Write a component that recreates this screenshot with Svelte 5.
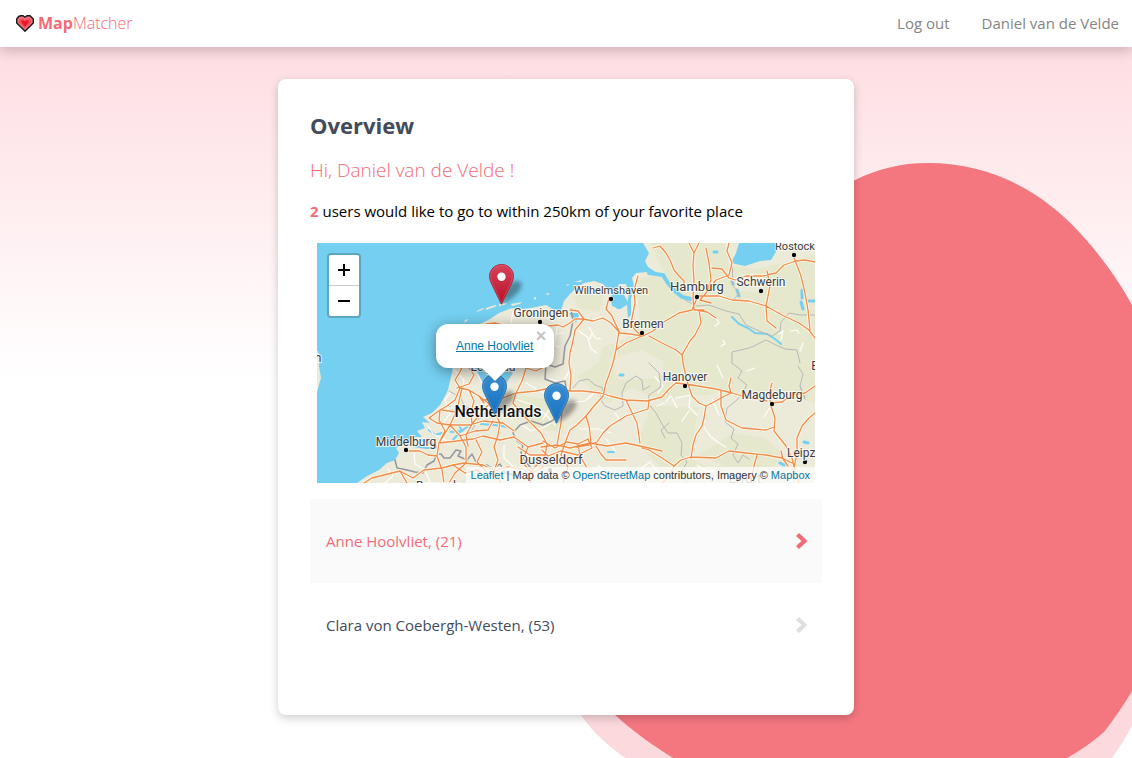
<script>
  const people = [
    { name: 'Anne Hoolvliet', age: 21, active: true },
    { name: 'Clara von Coebergh-Westen', age: 53, active: false }
  ];

  const markers = [
    { color: 'red', dx: -77, top: 21, label: 'Your favorite place' },
    { color: 'blue', dx: -84, top: 131, label: 'Anne Hoolvliet' },
    { color: 'blue', dx: -22, top: 140, label: 'Clara von Coebergh-Westen' }
  ];

  const cities = [
    { name: 'Rostock', x: 478, y: 7, dx: 477, dy: 12, size: 11 },
    { name: 'Schwerin', x: 444, y: 43, dx: 444, dy: 48, size: 12 },
    { name: 'Hamburg', x: 380, y: 48, dx: 380, dy: 54, size: 13 },
    { name: 'Wilhelmshaven', x: 294, y: 51, dx: 294, dy: 56, size: 11 },
    { name: 'Groningen', x: 224, y: 74, dx: 223, dy: 79, size: 12 },
    { name: 'Bremen', x: 326, y: 85, dx: 325, dy: 90, size: 12 },
    { name: 'Hanover', x: 368, y: 138, dx: 368, dy: 143, size: 12 },
    { name: 'Magdeburg', x: 455, y: 156, dx: 455, dy: 161, size: 12 },
    { name: 'Leipzig', x: 489, y: 214, dx: 488, dy: 219, size: 12 },
    { name: 'Middelburg', x: 89, y: 203, dx: 89, dy: 207, size: 12 },
    { name: 'Dusseldorf', x: 234, y: 221, dx: 233, dy: 227, size: 13 },
    { name: 'Lelystad', x: 176, y: 128, size: 12 },
    { name: 'Brussels', x: 122, y: 247, size: 12 }
  ];

  const highways = [
    'M169 81L178 80L186 82M224 81L232 83L241 82L246 84L253 80L258 76L266 76L276 78L286 75L294 80L303 90L313 91L326 93',
    'M253 67L261 68L267 76L258 87L256 98L253 110L252 120L254 132L253 147L246 157L244 180L240 202',
    'M292 55L289 66L295 73L298 80L302 88L299 107L296 120L292 132L289 140L286 153L277 163L269 173L272 183L273 190L274 201',
    'M321 33L317 47L318 60L314 80L318 87L325 93L309 100L299 107',
    'M332 93L345 100L359 107L365 112L366 120L370 138L375 153L382 160L389 163L387 175L385 183L379 192L376 202L374 215',
    'M326 93L336 88L345 80L362 70L375 67L380 55M382 67L384 80L378 92L373 98L365 112M380 67L390 69L399 75',
    'M336 5L343 3L349 10L353 17L357 27L362 33L367 38L368 48',
    'M372 0L377 10L376 22L377 38L376 55L377 67L387 67M377 10L382 0',
    'M389 5L392 20L394 37L389 50L383 57L394 60',
    'M412 0L410 8L415 20L412 32L399 37L389 50M395 25L405 26L412 35L418 37L429 33L445 33L459 30L467 22L479 18L488 17L498 19',
    'M380 53L402 53L415 57L432 58L449 63L465 72L482 80L492 87L498 95',
    'M450 28L453 43L449 63L450 78L459 85M477 15L481 25L484 33L488 50L491 67L493 87',
    'M166 157L186 155L199 150L219 148L233 145L254 148L266 148L283 150L293 153L309 157L330 158L345 154L352 146L359 140L375 142L399 146L415 150L432 155L450 158',
    'M498 143L488 150L475 152L465 159L454 160M455 140L452 150L454 163L458 175L457 188L469 203L475 215L478 228L482 240',
    'M389 163L397 159L404 155L414 150L412 143L414 135M404 147L404 163L409 177L425 185L437 186L449 187L457 184',
    'M325 205L332 207L345 215L357 223L352 233L345 240M357 223L364 217L374 214L399 215L412 208L429 210L449 212L465 215L475 220M440 212L437 223L434 240M464 208L466 216L471 223',
    'M498 170L492 175L485 183L480 195L480 210L477 225',
    'M332 157L331 166L309 173L293 183L286 190L280 199L272 202L259 204',
    'M309 157L317 174L320 180L323 200M224 204L240 202L253 205L273 200L290 203L309 200L332 205L345 208',
    'M279 203L284 211L289 217L309 217M269 173L260 182L253 187L248 200L244 212',
    'M147 120L143 129L138 137L143 145L152 147L162 153L167 160M143 145L138 157L130 163L123 167L112 175L120 180L133 182L153 182L166 178L186 180L197 188',
    'M145 145L142 158L140 167L133 182L127 192L122 200L120 213L125 227L127 240M140 145L152 141L157 132L150 122',
    'M92 208L103 208L111 212L120 213M125 225L107 227L96 235L83 228L67 232L55 235L47 240M83 228L90 240',
    'M125 225L136 222L147 220L166 222L178 228L190 224L206 226M122 200L140 198L156 196L166 193L183 197L197 194L211 204L226 200',
    'M133 182L143 193L149 204L149 220L138 230L132 240M123 167L122 177L128 188L122 200M152 147L157 158L154 169L155 181L149 192L151 203',
    'M155 181L168 165L173 160M162 153L171 160L177 168L183 180L181 192L177 204L181 217L177 228L184 240',
    'M199 150L196 160L204 170L214 180L224 190L230 201M199 150L205 138L209 125L219 128L225 125',
    'M143 193L158 188L171 187L176 178M125 167L138 169L150 166M136 222L148 230L160 227L170 236L177 228M159 197L165 209L160 219L169 228',
    'M226 198L238 205L250 199L261 201L271 196L275 205L261 212L244 208L231 213L225 207M230 201L228 213L218 224L207 237M244 212L251 224L246 240M261 201L263 213L270 225',
    'M201 204L213 212L227 212M211 204L205 219L215 230L226 224'
  ].join('');

  const minorRoads = [
    'M186 90L205 86L224 82L230 100L242 104M196 68L194 80M228 70L236 78M240 84L238 100L230 112M230 92L246 90M262 88L273 96L275 90M272 84L278 95L284 96',
    'M399 75L402 80L398 83M406 97L408 101L404 103M462 91L466 88L464 97M473 88L480 87L482 90M338 134L346 143L341 150M359 155L373 152L372 164L380 172',
    'M349 158L354 153L360 165M381 190L388 178M387 184L393 193L402 200L409 204M395 156L402 172M447 174L453 164M372 168L365 178M340 163L347 160',
    'M198 156L216 162L229 172L238 182M205 182L214 188L228 184L238 177M209 140L230 152L234 164L226 176M252 160L268 158L276 151M254 125L246 139L230 136',
    'M298 170L303 177M263 186L281 186L294 190M289 196L298 208M187 202L187 215L199 226M111 183L116 191L130 198',
    'M97 208L98 221L108 227L113 239M71 226L76 233L68 240M136 126L147 137L145 151M157 124L170 151L160 170L171 174M180 160L193 166L195 177',
    'M133 150L128 157L133 171L125 181M271 96L274 106L280 110M400 122L406 135M486 100L483 108M430 128L438 125',
    'M325 225L333 219L341 229M380 222L391 229L400 225M212 226L220 232L238 229L254 234M281 222L290 232L302 230'
  ].join('');

  const borders = [
    'M254 66L256 78L253 93L248 103L246 121L238 124L229 121L228 136L238 140L248 138L250 152L241 156L244 170L235 178L226 182L214 178L203 182L196 190L200 198L206 202L204 210L209 219L217 229L213 240',
    'M78 217L80 225L90 227L98 229L106 230L110 222L117 218L120 211L124 211L127 215L133 215L139 207L144 208L141 213L150 217L155 211L159 219L164 224L170 222L176 226L183 221L188 230L199 233'
  ].join('');

  const regions = [
    'M256 145L262 138L271 136L278 142L286 145L283 156L288 163L298 167L306 163L305 150L309 140L319 133L325 137L326 147L333 143',
    'M415 17L416 43L422 50L416 58M368 57L380 63L392 62L409 68L422 71L429 82L442 88L455 93L463 88L464 79L472 70L483 72L498 72',
    'M481 123L486 131L483 143L488 155M415 120L415 109L432 105L437 103L449 97L459 102L468 106L480 107L483 120M415 120L425 128L421 135L430 142L425 150L420 157L410 165L408 179L417 186L414 195L421 201L416 212L421 220L426 212L432 216',
    'M332 120L342 130L344 144L332 152L331 160L339 170L345 181L351 190L360 190L365 200L364 212L370 219L365 228L370 240M483 143L488 156M352 180L344 187L348 195',
    'M132 148L143 154L148 164L156 165L162 176L153 190M174 139L187 142L194 130L186 124'
  ].join('');
</script>

{#snippet chevron()}
  <svg class="chevron" viewBox="0 0 12 16" aria-hidden="true">
    <path d="M0 3L3 0L11.500 8L3 16L0 13L5.500 8Z" fill="currentColor" />
  </svg>
{/snippet}

<div class="page">
  <svg class="backdrop" viewBox="0 0 1132 758" preserveAspectRatio="xMaxYMax slice" aria-hidden="true">
    <path
      fill="#fbd9dd"
      d="M560 600C560 660 570 699 581 715C594 734 608 745 625 758H1112C1119 748 1126 737 1132 726V500Z"
    />
    <path
      fill="#f47780"
      d="M615 715C633 731 652 745 673 758H1067Q1087 747 1104 732Q1119 713 1132 691V305C1120 283 1103 258 1080 233C1042 191 990 163 928 163C900 163 878 169 855 180C730 238 600 400 590 560C587 620 590 690 615 715Z"
    />
  </svg>

  <header>
    <a class="brand" href="#home">
      <svg viewBox="0 0 18 17" aria-hidden="true">
        <path d="M5 .7H7L9 2.200L11 .7H14L17.300 4V8L9 16.200L.7 8V4L3 1.200Z" fill="#f0717b" stroke="#17171b" stroke-width="1.400" />
        <path d="M4.500 3.500H7L9 5.200L11 3.500H13.500L15 5V7.500L9 13.500L3 7.500V5Z" fill="#f34d5a" />
        <path d="M5.500 5.500H7.500L9 6.500L10.500 5.500H12.500V7.500L9 11.500L5.500 7.500Z" fill="#ec1528" />
      </svg>
      <span><b>Map</b>Matcher</span>
    </a>
    <nav>
      <a href="#logout">Log out</a>
      <a href="#profile">Daniel van de Velde</a>
    </nav>
  </header>

  <main>
    <h1>Overview</h1>
    <h2>Hi, Daniel van de Velde !</h2>
    <p class="summary"><b>2</b> users would like to go to within 250km of your favorite place</p>

    <div class="map">
      <svg class="tiles" viewBox="0 0 498 240" preserveAspectRatio="xMidYMid slice" aria-hidden="true">
        <rect width="498" height="240" fill="#75cff0" />
        <g fill="#ecead9">
          <path
            d="M40 240L50 233L62 227L70 220L78 217L82 210L79 205L84 202L91 200L97 194L105 194L100 188L108 185L105 179L113 180L106 174L115 170L119 166L123 162L128 153L131 147L133 138L136 125L138 104L143 88L154 91L161 82L173 76L182 70L195 65L205 66L214 65L229 62L237 67L244 68L247 58L253 51L259 45L267 40L277 38L286 41L291 47L295 51L294 58L295 63L303 66L307 60L303 55L300 47L302 41L309 41L312 51L310 61L311 75L314 72L314 56L317 43L315 35L319 30L331 29L340 30L331 24L328 18L332 10L326 0H422L419 10L414 20L428 23L443 18L454 17L460 7L458 0H498V240Z"
          />
          <path d="M0 110L3 111L2 123L4 135L2 142L0 149Z" />
          <path d="M148 77L152 76L147 80ZM160 68L166 65L167 66L160 69ZM169 65L178 62L180 63L169 67ZM182 61L190 60L188 62L182 63ZM194 61L205 59L203 61L195 63ZM216 55L219 54L219 57ZM228 51L232 50L232 52ZM249 42L252 41L251 43ZM257 39L265 37L264 39Z" />
        </g>
        <path
          fill="#e6e8cd"
          d="M334 0H408L412 22L440 26L498 12V160L474 153L452 157L434 149L411 153L401 148L389 160L376 150L346 158L314 145L290 161L276 147L260 134L282 119L286 104L309 96L323 80L320 36L347 30ZM334 162L381 165L373 215L391 225L425 219L404 240H329L342 222L320 202ZM381 212L416 190L447 195L466 210L451 231L414 225ZM187 151L238 157L248 190L213 184ZM256 53L288 48L282 69L261 65Z"
        />
        <path
          fill="#ecead9"
          d="M292 116L325 107L347 119L343 135L302 137ZM421 30L451 37L444 49L418 48ZM377 153L402 151L392 161L384 160Z"
        />
        <g fill="none" stroke="#75cff0" stroke-linecap="round">
          <path d="M332 30L346 32L351 40L358 48L365 54L374 56" stroke-width="4" />
          <path d="M415 74L422 81L431 85L438 90L450 91L458 96L464 101" stroke-width="2" />
          <path d="M485 47L485 55M484 59L486 66M492 58H498M420 47L422 53M415 38L416 41M397 9H400M303 132H306M350 135L353 136M463 220L467 222M487 199L491 200" stroke-width="3" />
          <path d="M302 61L305 59L303 55" stroke-width="10" />
          <path d="M112 187L118 192L125 190M97 203L109 205L118 205M104 197L114 200L122 206M134 189L145 188L142 182M136 197L142 190L150 184L158 181M164 181L177 182L191 184M291 209L297 209" stroke-width="2" />
        </g>
        <path d="M143 102L157 98L171 109L169 120L187 122L196 130L188 142L180 150L169 146L162 132L153 124Z" fill="#75cff0" />
        <path d="M252 70L263 70L259 80ZM298 48L302 53L299 57Z" fill="#75cff0" />
        <g fill="none" stroke-linejoin="round" stroke-linecap="round">
          <path d={minorRoads} stroke="#fffefa" stroke-width="1.200" />
          <path d={regions} stroke="#b9b8b8" stroke-width="1" />
          <path d={borders} stroke="#96969e" stroke-width="1.500" />
          <path d={highways} stroke="#fff8ec" stroke-width="3" />
          <path d={highways} stroke="#f08d4c" stroke-width="1.300" />
        </g>
        {#each cities as city}
          {#if city.dx}
            <circle cx={city.dx} cy={city.dy} r="2.200" fill={city.name === 'Dusseldorf' ? '#77767a' : '#08080a'} stroke="#fff" stroke-width="1" paint-order="stroke" />
          {/if}
          <text class="city" x={city.x} y={city.y} font-size={city.size}>{city.name}</text>
        {/each}
        <text class="city" x="1" y="119" font-size="12">h</text>
        <text class="city" x="498" y="127" font-size="12">B</text>
        <text class="city faint" x="428" y="240" font-size="13">Erfurt</text>
        <text class="country" x="181" y="174">Netherlands</text>
      </svg>

      {#each markers as marker}
        <button class="marker" style="left: calc(50% + {marker.dx}px); top: {marker.top}px" aria-label={marker.label}>
          <svg viewBox="0 0 41 41" aria-hidden="true">
            <defs>
              <linearGradient id="pin-red" x1="0" y1="0" x2="0" y2="1">
                <stop offset="0" stop-color="#d7435b" />
                <stop offset="1" stop-color="#b80e25" />
              </linearGradient>
              <linearGradient id="pin-blue" x1="0" y1="0" x2="0" y2="1">
                <stop offset="0" stop-color="#3a8fd2" />
                <stop offset="1" stop-color="#146fc0" />
              </linearGradient>
              <filter id="pin-shadow" x="-30%" y="-30%" width="160%" height="160%"><feGaussianBlur stdDeviation="2" /></filter>
            </defs>
            <path d="M13 40L16 27Q21 17 28 17Q36 18 30 27Q24 35 13 40Z" opacity=".35" filter="url(#pin-shadow)" />
            <path
              d="M12.500 .5C5.700 .5 .5 5.900 .5 12.500C.5 15.300 1.900 18.300 2.700 20.100L12.500 40.200L22.300 20.100C23.100 18.300 24.500 15.300 24.500 12.500C24.500 5.900 19.300 .5 12.500 .5Z"
              fill="url(#pin-{marker.color})"
              stroke={marker.color === 'red' ? '#b02a40' : '#2e77ad'}
            />
            <path
              d="M12.500 1.600C6.300 1.600 1.600 6.500 1.600 12.500C1.600 15.100 2.900 17.800 3.700 19.600L12.500 37.700L21.300 19.600C22.100 17.800 23.400 15.100 23.400 12.500C23.400 6.500 18.700 1.600 12.500 1.600Z"
              fill="none"
              stroke="#fff"
              opacity=".12"
            />
            <circle cx="12.500" cy="12.800" r="4.200" fill="#fff" />
          </svg>
        </button>
      {/each}

      <div class="popup">
        <a href="#anne">Anne Hoolvliet</a>
        <button class="close" aria-label="Close popup">×</button>
      </div>

      <div class="zoom">
        <button aria-label="Zoom in"><svg viewBox="0 0 12 12" aria-hidden="true"><path d="M0 6H12M6 0V12" /></svg></button>
        <button aria-label="Zoom out"><svg viewBox="0 0 12 12" aria-hidden="true"><path d="M0 6H12" /></svg></button>
      </div>

      <div class="attribution">
        <a href="#leaflet">Leaflet</a> | Map data © <a href="#osm">OpenStreetMap</a> contributors, Imagery © <a href="#mapbox">Mapbox</a>
      </div>
    </div>

    <ul>
      {#each people as person}
        <li>
          <a class="person" class:active={person.active} href="#person">
            <span>{person.name}, ({person.age})</span>
            {@render chevron()}
          </a>
        </li>
      {/each}
    </ul>
  </main>
</div>

<style>
  :global(body) {
    margin: 0;
  }

  .page {
    box-sizing: border-box;
    position: relative;
    isolation: isolate;
    min-height: 100vh;
    padding-bottom: 43px;
    overflow: hidden;
    background: linear-gradient(#fed9de, #fff 50%);
    color: #000;
    font-family: 'Open Sans', 'Noto Sans', sans-serif;
    font-size: 15px;
    line-height: 24px;
  }

  .backdrop {
    position: absolute;
    z-index: -1;
    inset: 0;
    width: 100%;
    height: 100%;
  }

  a {
    color: inherit;
    text-decoration: none;
  }

  header {
    display: flex;
    align-items: center;
    justify-content: space-between;
    padding: 11px 13px 12px 16px;
    background: #fff;
    box-shadow: 0 4px 12px rgba(0, 0, 0, 0.2);
  }

  .brand {
    display: flex;
    align-items: center;
    gap: 4px;
    color: #f26c77;
    font-size: 16px;
    font-weight: 300;
  }

  .brand svg {
    width: 18px;
    height: 17px;
  }

  b {
    font-weight: 700;
  }

  nav {
    display: flex;
    gap: 32px;
    color: #858585;
  }

  main {
    box-sizing: border-box;
    max-width: 576px;
    margin: 32px auto 0;
    padding: 32px 32px 48px;
    border-radius: 8px;
    background: #fff;
    box-shadow: 0 3px 10px rgba(0, 0, 0, 0.2);
  }

  h1 {
    margin: 0;
    color: #434b5b;
    font-size: 22px;
    font-weight: 700;
    line-height: 28px;
  }

  h2 {
    margin: 16px 0 14px;
    color: #f26c77;
    font-size: 19px;
    font-weight: 300;
    line-height: 30px;
  }

  .summary {
    margin: 0;
  }

  .summary b {
    color: #f26c77;
  }

  .map {
    position: relative;
    height: 240px;
    margin: 20px 7px 16px;
    overflow: hidden;
    background: #75cff0;
    font-family: 'Liberation Sans', Arial, sans-serif;
  }

  .tiles {
    display: block;
    width: 100%;
    height: 100%;
  }

  .city,
  .country {
    fill: #3b3b40;
    stroke: rgba(255, 255, 255, 0.75);
    stroke-width: 2px;
    paint-order: stroke;
    text-anchor: middle;
    font-family: Roboto, sans-serif;
  }

  .country {
    fill: #111;
    font-size: 16px;
    font-weight: 500;
  }

  .faint {
    opacity: 0.5;
  }

  button {
    padding: 0;
    border: 0;
    background: none;
    font: inherit;
    cursor: pointer;
  }

  .marker {
    position: absolute;
    width: 41px;
    height: 41px;
  }

  .marker svg {
    display: block;
    overflow: visible;
  }

  .popup {
    box-sizing: border-box;
    position: absolute;
    top: 81px;
    left: calc(50% - 130px);
    width: 118px;
    padding: 13px 20px;
    border-radius: 12px;
    background: #fff;
    box-shadow: 0 3px 14px rgba(0, 0, 0, 0.4);
    color: #0078a8;
    font-size: 12px;
    line-height: 18px;
    white-space: nowrap;
  }

  .popup::after {
    content: '';
    position: absolute;
    top: 100%;
    left: 50%;
    margin-left: -13px;
    border: 13px solid transparent;
    border-top-color: #fff;
    border-bottom: 0;
  }

  .popup a {
    text-decoration: underline;
  }

  .close {
    position: absolute;
    top: 4px;
    right: 4px;
    width: 18px;
    color: #c3c3c3;
    font-size: 18px;
    font-weight: 700;
    line-height: 16px;
  }

  .zoom {
    position: absolute;
    top: 10px;
    left: 10px;
    display: grid;
    border: 2px solid rgba(0, 0, 0, 0.2);
    border-radius: 4px;
  }

  .zoom button {
    display: grid;
    place-items: center;
    width: 30px;
    height: 30px;
    border-radius: 0 0 2px 2px;
    background: #fff;
  }

  .zoom button:first-child {
    height: 31px;
    border-bottom: 1px solid #ccc;
    border-radius: 2px 2px 0 0;
  }

  .zoom svg {
    width: 12px;
    height: 12px;
    stroke: #000;
    stroke-width: 2px;
  }

  .attribution {
    position: absolute;
    right: 0;
    bottom: 0;
    padding: 0 5px;
    background: rgba(255, 255, 255, 0.7);
    color: #333;
    font-size: 11px;
    line-height: 16px;
    white-space: nowrap;
  }

  .attribution a {
    color: #0078a8;
  }

  ul {
    margin: 0;
    padding: 0;
    list-style: none;
  }

  .person {
    display: flex;
    align-items: center;
    justify-content: space-between;
    padding: 30px 14px 30px 16px;
    color: #434b5b;
  }

  .person.active {
    background: #fafafa;
    color: #f26c77;
  }

  .chevron {
    width: 12px;
    height: 16px;
    color: #dfdfdf;
  }

  .active .chevron {
    color: #f26c77;
  }
</style>
